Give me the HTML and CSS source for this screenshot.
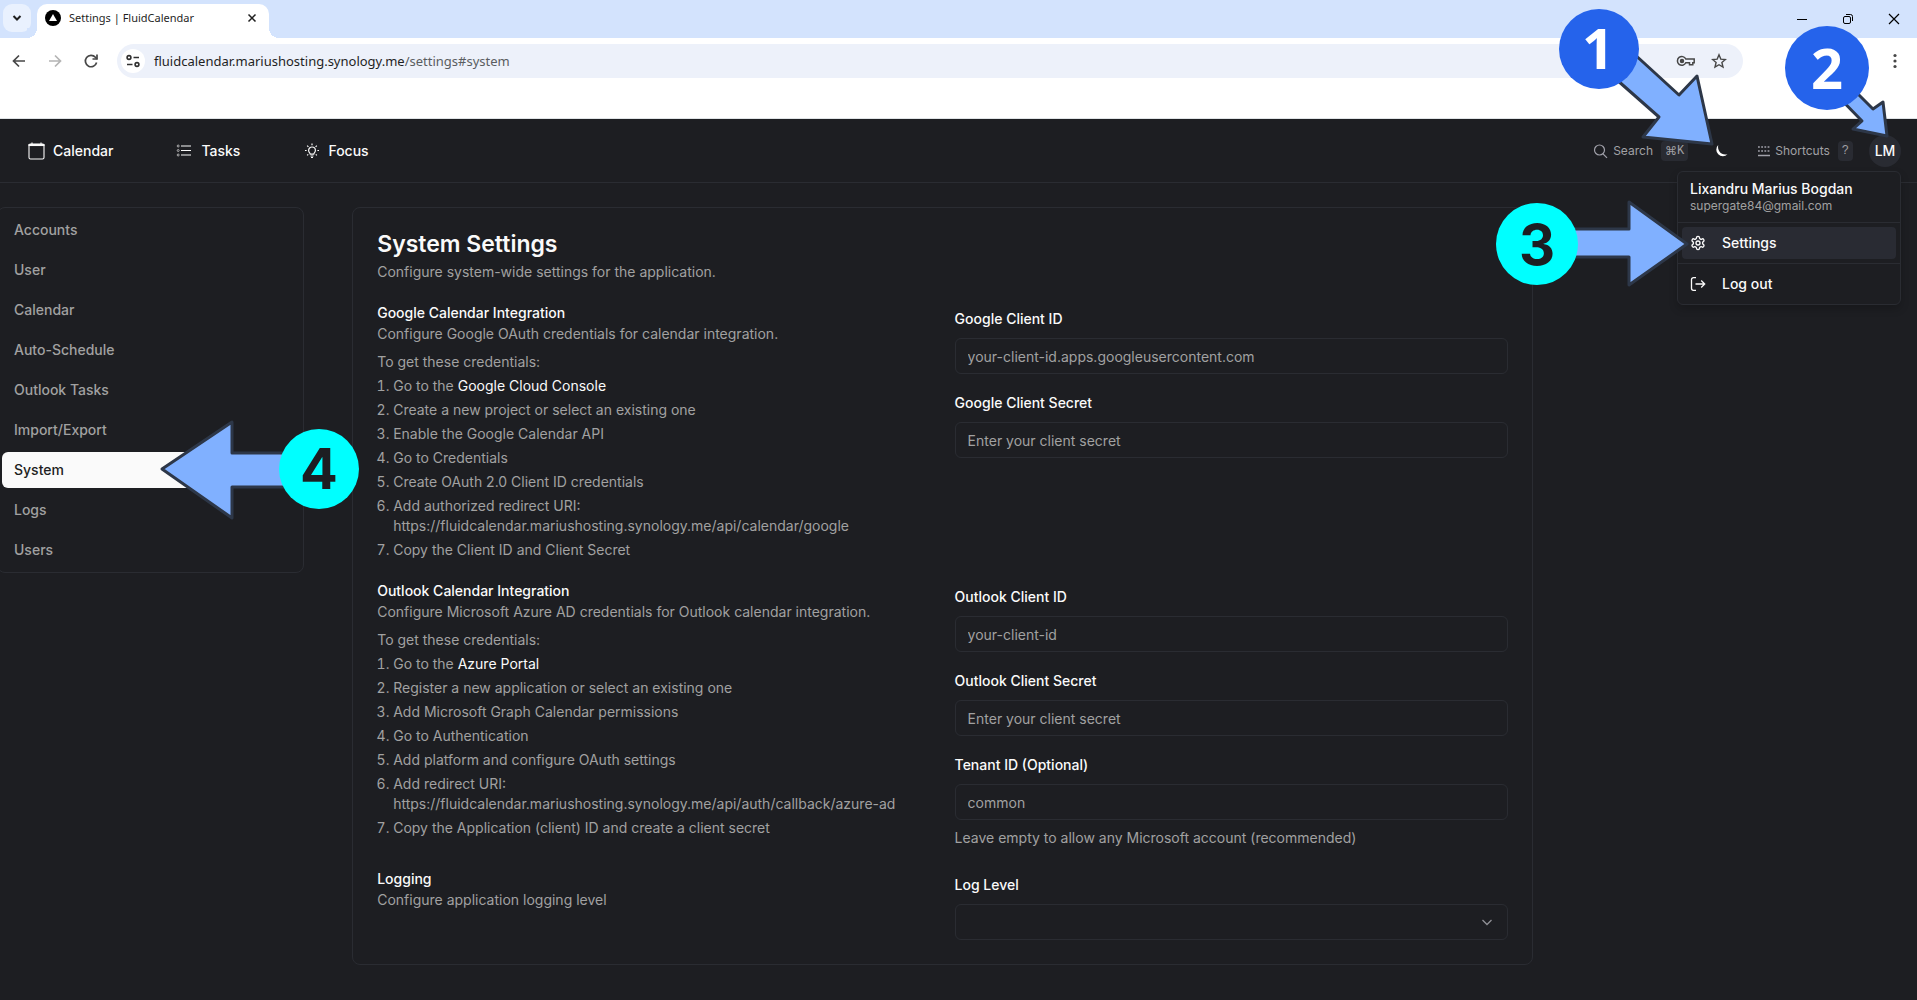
FILE: index.html
```html
<!DOCTYPE html>
<html lang="en">
<head>
<meta charset="utf-8">
<title>Settings | FluidCalendar</title>
<link rel="stylesheet" href="styles.css">
</head>
<body>
<div class="tabstrip">
  <button class="tab-search" aria-label="Search tabs"><svg width="10" height="10" viewBox="0 0 10 10" fill="none" stroke="#1f1f1f" stroke-width="2"><path d="M1.5 3l3.500 3.500L8.500 3"/></svg></button>
  <div class="tab">
    <svg width="16" height="16" viewBox="0 0 16 16"><circle cx="8" cy="8" r="8" fill="#000"/><path d="M8 4l4 7H4z" fill="#fff"/></svg>
    <span class="tab-title">Settings | FluidCalendar</span>
    <button class="plain" aria-label="Close tab"><svg width="10" height="10" viewBox="0 0 10 10" stroke="#1f1f1f" stroke-width="1.500"><path d="M1.500 1.500l7 7M8.500 1.500l-7 7"/></svg></button>
  </div>
  <div class="window-controls">
    <button class="plain" aria-label="Minimize"><svg width="12" height="12" viewBox="0 0 12 12" stroke="#000" fill="none"><path d="M1 6.500h10"/></svg></button>
    <button class="plain" aria-label="Restore"><svg width="12" height="12" viewBox="0 0 12 12" stroke="#000" fill="none"><rect x="1.500" y="3.500" width="7" height="7" rx="1.500"/><path d="M4 1.500h4.500a2 2 0 0 1 2 2V8"/></svg></button>
    <button class="plain" aria-label="Close"><svg width="12" height="12" viewBox="0 0 12 12" stroke="#000" fill="none" stroke-width="1.200"><path d="M1 1l10 10M11 1L1 11"/></svg></button>
  </div>
</div>
<div class="toolbar">
  <div class="toolbar-row">
    <div class="history">
      <button class="plain" aria-label="Back"><svg width="16" height="16" viewBox="0 0 16 16" fill="none" stroke="#474747" stroke-width="1.700"><path d="M14 8H3M8 2.500L2.500 8 8 13.500"/></svg></button>
      <button class="plain" aria-label="Forward"><svg width="16" height="16" viewBox="0 0 16 16" fill="none" stroke="#b4b4b4" stroke-width="1.700"><path d="M2 8h11M8 2.500L13.500 8 8 13.500"/></svg></button>
      <button class="plain" aria-label="Reload"><svg width="16" height="16" viewBox="0 0 16 16" fill="none" stroke="#474747" stroke-width="1.700"><path d="M13.600 9.500A5.700 5.700 0 1 1 12.400 4.300L14 6"/><path d="M14 1.500V6H9.500"/></svg></button>
    </div>
    <div class="omnibox">
      <button class="site-info" aria-label="Site information"><svg width="14" height="14" viewBox="0 0 14 14" fill="none" stroke="#303030" stroke-width="1.600"><circle cx="3" cy="3.500" r="1.900"/><path d="M7.500 3.500H13M1 10.500h5.500"/><circle cx="11" cy="10.500" r="1.900"/></svg></button>
      <span class="url">fluidcalendar.mariushosting.synology.me<span class="path">/settings#system</span></span>
      <button class="plain" aria-label="Passwords"><svg width="20" height="16" viewBox="0 0 20 16" fill="none" stroke="#474747" stroke-width="1.500"><path d="M9.800 6H18.200V9.800H16.800V11.800H13.500V9.800H9.800A4.400 4.400 0 1 1 9.800 6z"/><circle cx="6" cy="8" r="1.500" fill="#474747"/></svg></button>
      <button class="plain" aria-label="Bookmark"><svg width="16" height="16" viewBox="0 0 16 16" fill="none" stroke="#474747" stroke-width="1.400"><path d="M8 1.800l1.800 4.300 4.600.4-3.500 3 1.100 4.600L8 11.700l-4 2.400 1.100-4.600-3.500-3 4.600-.4z"/></svg></button>
    </div>
    <button class="plain more" aria-label="Menu"><svg width="16" height="16" viewBox="0 0 16 16" fill="#474747"><circle cx="8" cy="2.500" r="1.600"/><circle cx="8" cy="8" r="1.600"/><circle cx="8" cy="13.500" r="1.600"/></svg></button>
  </div>
</div>

<div class="app">
  <header class="app-header">
    <nav class="main-nav">
      <a href="#calendar"><svg width="20" height="20" viewBox="0 0 20 20" fill="none" stroke="#fafafa" stroke-width="1.100"><rect x="2" y="3" width="15" height="15" rx="1.500"/><path d="M2 3.500h15v1H2z" fill="#fafafa"/><path d="M5 1.500v2M14 1.500v2"/></svg>Calendar</a>
      <a href="#tasks"><svg width="20" height="20" viewBox="0 0 20 20" fill="none" stroke="#fafafa" stroke-width="1.200"><path d="M6 5H16M6 9.500H16M6 14H16"/><g stroke-width=".6"><circle cx="3.200" cy="5" r="1"/><circle cx="3.200" cy="9.500" r="1"/><circle cx="3.200" cy="14" r="1"/></g></svg>Tasks</a>
      <a href="#focus"><svg width="20" height="20" viewBox="0 0 20 20" fill="none" stroke="#fafafa" stroke-width="1.200"><path d="M8.300 13.200c0-1.200-1.700-1.800-1.700-3.800a3.400 3.400 0 0 1 6.800 0c0 2-1.700 2.600-1.700 3.800zM8.500 15h3M9 16.500h2"/><path d="M10 2.500v1.800M5.200 4.700l1.200 1.200M14.800 4.700l-1.200 1.200M3 9.500h1.600M15.400 9.500H17M5.200 14.300l1-1M14.800 14.300l-1-1"/></svg>Focus</a>
    </nav>
    <div class="tools">
      <button class="tool">
        <svg width="16" height="16" viewBox="0 0 16 16" fill="none" stroke="#a1a1aa" stroke-width="1.200"><circle cx="6.500" cy="7" r="5"/><path d="M10 10.800l4 4"/></svg>
        Search <kbd><span class="cmd">⌘</span>K</kbd></button>
      <button class="plain moon" aria-label="Toggle theme"><svg width="16" height="16" viewBox="0 0 16 16" fill="#fff"><path d="M5.200 2A6.500 6.500 0 1 0 14.500 11.200C9 13 4 8 5.200 2z"/></svg></button>
      <button class="tool">
        <svg width="14" height="14" viewBox="0 0 14 14" fill="none" stroke="#a1a1aa" stroke-width="1.500"><path d="M1 3h12M1 7h12" stroke-dasharray="1.800 1.400"/><path d="M1 11.500h12"/></svg>
        Shortcuts <kbd>?</kbd></button>
      <div class="account">
        <button class="avatar">LM</button>
        <div class="menu">
          <div class="who"><span class="name">Lixandru Marius Bogdan</span><span class="email">supergate84@gmail.com</span></div>
          <hr>
          <a class="menu-item current" href="#settings"><svg width="16" height="16" viewBox="0 0 24 24" fill="none" stroke="#fafafa" stroke-width="2" stroke-linejoin="round"><path d="M12.220 2h-.440a2 2 0 0 0-2 2v.180a2 2 0 0 1-1 1.730l-.430.250a2 2 0 0 1-2 0l-.150-.080a2 2 0 0 0-2.730.730l-.220.380a2 2 0 0 0 .730 2.730l.150.100a2 2 0 0 1 1 1.720v.510a2 2 0 0 1-1 1.740l-.150.090a2 2 0 0 0-.730 2.730l.220.380a2 2 0 0 0 2.730.730l.150-.080a2 2 0 0 1 2 0l.430.250a2 2 0 0 1 1 1.730V20a2 2 0 0 0 2 2h.440a2 2 0 0 0 2-2v-.180a2 2 0 0 1 1-1.730l.430-.250a2 2 0 0 1 2 0l.150.080a2 2 0 0 0 2.730-.730l.220-.390a2 2 0 0 0-.730-2.730l-.150-.080a2 2 0 0 1-1-1.740v-.500a2 2 0 0 1 1-1.740l.150-.090a2 2 0 0 0 .730-2.730l-.220-.380a2 2 0 0 0-2.730-.730l-.150.080a2 2 0 0 1-2 0l-.430-.250a2 2 0 0 1-1-1.730V4a2 2 0 0 0-2-2z"/><circle cx="12" cy="12" r="3"/></svg>Settings</a>
          <hr>
          <a class="menu-item" href="#logout"><svg width="16" height="16" viewBox="0 0 16 16" fill="none" stroke="#fafafa" stroke-width="1.300"><path d="M6 1.700H3.500a2 2 0 0 0-2 2v8.600a2 2 0 0 0 2 2H6M5.500 8h9M11.200 4.500L14.700 8l-3.500 3.500"/></svg>Log out</a>
        </div>
      </div>
    </div>
  </header>

  <main class="layout">
    <aside class="sidebar">
      <a href="#accounts">Accounts</a>
      <a href="#user">User</a>
      <a href="#calendar">Calendar</a>
      <a href="#auto-schedule">Auto-Schedule</a>
      <a href="#outlook-tasks">Outlook Tasks</a>
      <a href="#import-export">Import/Export</a>
      <a class="active" href="#system">System</a>
      <a href="#logs">Logs</a>
      <a href="#users">Users</a>
    </aside>
    <section class="card">
      <h1>System Settings</h1>
      <p class="subtitle">Configure system-wide settings for the application.</p>
      <div class="row">
        <div class="info">
          <h2>Google Calendar Integration</h2>
          <p>Configure Google OAuth credentials for calendar integration.</p>
          <p class="intro">To get these credentials:</p>
          <ol>
            <li>Go to the <a href="#google">Google Cloud Console</a></li>
            <li>Create a new project or select an existing one</li>
            <li>Enable the Google Calendar API</li>
            <li>Go to Credentials</li>
            <li>Create OAuth 2.0 Client ID credentials</li>
            <li>Add authorized redirect URI:<br>https://fluidcalendar.mariushosting.synology.me/api/calendar/google</li>
            <li>Copy the Client ID and Client Secret</li>
          </ol>
        </div>
        <div class="fields">
          <div class="field"><label for="g-id">Google Client ID</label><input id="g-id" type="text" placeholder="your-client-id.apps.googleusercontent.com"></div>
          <div class="field"><label for="g-secret">Google Client Secret</label><input id="g-secret" type="password" placeholder="Enter your client secret"></div>
        </div>
      </div>
      <div class="row">
        <div class="info">
          <h2>Outlook Calendar Integration</h2>
          <p>Configure Microsoft Azure AD credentials for Outlook calendar integration.</p>
          <p class="intro">To get these credentials:</p>
          <ol>
            <li>Go to the <a href="#azure">Azure Portal</a></li>
            <li>Register a new application or select an existing one</li>
            <li>Add Microsoft Graph Calendar permissions</li>
            <li>Go to Authentication</li>
            <li>Add platform and configure OAuth settings</li>
            <li>Add redirect URI:<br>https://fluidcalendar.mariushosting.synology.me/api/auth/callback/azure-ad</li>
            <li>Copy the Application (client) ID and create a client secret</li>
          </ol>
        </div>
        <div class="fields">
          <div class="field"><label for="o-id">Outlook Client ID</label><input id="o-id" type="text" placeholder="your-client-id"></div>
          <div class="field"><label for="o-secret">Outlook Client Secret</label><input id="o-secret" type="password" placeholder="Enter your client secret"></div>
          <div class="field"><label for="tenant">Tenant ID (Optional)</label><input id="tenant" type="text" placeholder="common"><p>Leave empty to allow any Microsoft account (recommended)</p></div>
        </div>
      </div>
      <div class="row">
        <div class="info">
          <h2>Logging</h2>
          <p>Configure application logging level</p>
        </div>
        <div class="fields">
          <div class="field"><label for="log">Log Level</label>
            <div class="select"><select id="log"><option></option></select><svg width="16" height="16" viewBox="0 0 16 16" fill="none" stroke="#909096" stroke-width="1.300"><path d="M3.500 6L8 10.500 12.500 6"/></svg></div>
          </div>
        </div>
      </div>
    </section>
  </main>
</div>

<svg class="steps steps-right" width="437" height="320" viewBox="1480 0 437 320">
  <g class="arrow">
    <path d="M1600 40L1620 41 1679 95 1697 76 1712 144 1643 137 1659 117 1600 65z"/>
    <path d="M1830 66L1873 109 1883 102 1887 136 1853 129 1862 121 1825 83z"/>
    <path d="M1560 229H1629V202L1687 244 1629 285V257H1560z"/>
  </g>
  <circle cx="1599" cy="49" r="40" fill="#2563eb"/>
  <circle cx="1827" cy="68" r="42" fill="#2563eb"/>
  <circle cx="1537" cy="244" r="41" fill="#0ff"/>
  <g class="digit light"><text x="1598" y="69">1</text><text x="1827" y="89">2</text></g>
  <text class="digit" x="1537" y="265">3</text>
</svg>
<svg class="steps steps-left" width="380" height="540" viewBox="0 0 380 540">
  <path class="arrow" d="M162 469L232 422V453H300V487H232V518z"/>
  <circle cx="319" cy="469" r="40" fill="#0ff"/>
  <text class="digit" x="319" y="489">4</text>
</svg>
</body>
</html>
```
FILE: styles.css
```css
* { box-sizing: border-box; }
body {
  margin: 0;
  min-height: 100vh;
  display: flex;
  flex-direction: column;
  position: relative;
  overflow-x: hidden;
  background: #1d1e22;
  color: #fafafa;
  font: 14px/20px Inter, "Liberation Sans", sans-serif;
}
button, input, select { font: inherit; color: inherit; }
button { border: 0; padding: 0; background: none; display: flex; align-items: center; }
svg { display: block; flex: none; }
a { color: inherit; text-decoration: none; }
h1, h2, p, ol { margin: 0; }

/* browser chrome */
.tabstrip { display: flex; height: 38px; background: #d3e3fd; padding-right: 17px; }
.tab-search { width: 28px; height: 28px; margin: 4px 6px 0 3px; border-radius: 9px; background: #e9f1fe; justify-content: center; }
.tab { display: flex; align-items: center; width: 232px; height: 34px; margin-top: 4px; padding: 0 12px 6px 8px; border-radius: 10px 10px 0 0; background: #fff; position: relative; }
.tab::before, .tab::after { content: ""; position: absolute; bottom: 0; width: 10px; height: 10px; }
.tab::before { left: -10px; background: radial-gradient(circle at 0 0, #d3e3fd 10px, #fff 10px); }
.tab::after { right: -10px; background: radial-gradient(circle at 100% 0, #d3e3fd 10px, #fff 10px); }
.tab-title { flex: 1; margin-left: 8px; color: #1f1f1f; font: 11px/16px "Noto Sans", sans-serif; white-space: nowrap; }
.window-controls { display: flex; align-items: center; gap: 34px; margin-left: auto; }
.toolbar { height: 81px; padding-top: 6px; background: #fff; border-bottom: 1px solid #dfe3e6; }
.toolbar-row { display: flex; align-items: center; height: 34px; padding-right: 14px; }
.history { display: flex; gap: 20px; padding: 0 18px 0 11px; }
.omnibox { display: flex; align-items: center; flex: 1; height: 34px; padding: 0 16px 0 4px; border-radius: 17px; background: #edf1fa; gap: 15px; }
.site-info { width: 24px; height: 24px; border-radius: 12px; background: #fff; justify-content: center; }
.url { flex: 1; margin-left: -6px; color: #1f1f1f; font: 13px/20px "Noto Sans", sans-serif; }
.path { color: #5a5d61; }
.more { margin-left: 144px; }

/* app header */
.app { flex: 1; }
.app-header { display: flex; justify-content: space-between; align-items: center; height: 64px; padding: 0 16px 0 27px; border-bottom: 1px solid #2a2c32; }
.main-nav { display: flex; gap: 62px; font-weight: 500; }
.main-nav a { display: flex; align-items: center; gap: 6px; }
.tools { display: flex; align-items: center; }
.tool { gap: 4px; color: #a1a1a5; font-size: 12px; }
kbd { display: flex; align-items: center; margin-left: 4px; padding: 0 4px; border-radius: 4px; background: #292b32; color: #a1a1a5; font: 12px/20px "Liberation Mono", "DejaVu Sans Mono", monospace; }
.cmd { font-family: "DejaVu Sans", sans-serif; }
.moon { margin: 0 28px 0 25px; }
.account { position: relative; margin-left: 16px; }
.avatar { width: 32px; height: 32px; border-radius: 16px; background: #292b32; justify-content: center; font-weight: 500; }
.menu { position: absolute; top: 36px; right: 0; width: 224px; padding: 4px; border: 1px solid #2a2c32; border-radius: 6px; background: #1d1e22; box-shadow: 0 4px 8px rgba(0, 0, 0, .2); z-index: 2; }
.who { display: flex; flex-direction: column; gap: 4px; padding: 6px 8px; }
.name { font-weight: 500; line-height: 14px; }
.email { color: #a1a1a1; font-size: 12px; line-height: 12px; }
.menu hr { height: 1px; margin: 4px -4px; border: 0; background: #2a2c32; }
.menu-item { display: flex; align-items: center; gap: 16px; height: 32px; padding: 0 8px; border-radius: 4px; font-weight: 500; }
.menu-item.current { background: #292b33; }

/* settings layout */
.layout { display: flex; align-items: flex-start; gap: 48px; max-width: 1536px; margin: 24px 0 35px -3px; }
.sidebar { display: flex; flex-direction: column; gap: 4px; flex: 0 0 20%; padding: 4px; border: 1px solid #2a2c32; border-radius: 8px; color: #a1a1a1; font-weight: 500; }
.sidebar a { padding: 8px 12px; border-radius: 6px; }
.sidebar .active { background: #fafafa; color: #1d1e22; }
.card { flex: 1; min-width: 0; padding: 24px; border: 1px solid #2a2c32; border-radius: 8px; }
h1 { font-size: 23px; line-height: 24px; font-weight: 600; }
.subtitle { margin-top: 6px; }
.card p, ol { color: #a1a1a1; }
.row { display: grid; grid-template-columns: 1fr 1fr; gap: 24px; margin-top: 24px; }
h2 { margin-bottom: 4px; font-size: 14px; line-height: 14px; font-weight: 500; }
.info .intro { margin-top: 8px; }
ol { padding-left: 16px; }
li { margin-top: 4px; }
li a { color: #fafafa; }
.fields { display: flex; flex-direction: column; gap: 16px; }
.field { display: flex; flex-direction: column; }
.field p { margin-top: 8px; }
label { margin-bottom: 6px; line-height: 26px; font-weight: 500; }
input, select { width: 100%; height: 36px; padding: 0 12px; border: 1px solid #2a2c32; border-radius: 6px; background: transparent; }
input::placeholder { color: #a1a1a1; opacity: 1; }
.select { display: grid; align-items: center; }
.select > * { grid-area: 1 / 1; }
.select select { appearance: none; }
.select svg { justify-self: end; margin-right: 13px; pointer-events: none; }

/* numbered walkthrough markers */
.steps { position: absolute; top: 0; z-index: 3; pointer-events: none; }
.steps-right { right: 0; }
.steps-left { left: 0; }
.arrow { fill: #80b0ff; stroke: #2d3748; stroke-width: 3px; stroke-linejoin: round; }
.digit { fill: #1d1e22; font: 700 56px Inter, sans-serif; text-anchor: middle; }
.light { fill: #fff; font-family: "Open Sans", sans-serif; font-size: 56px; }
```
